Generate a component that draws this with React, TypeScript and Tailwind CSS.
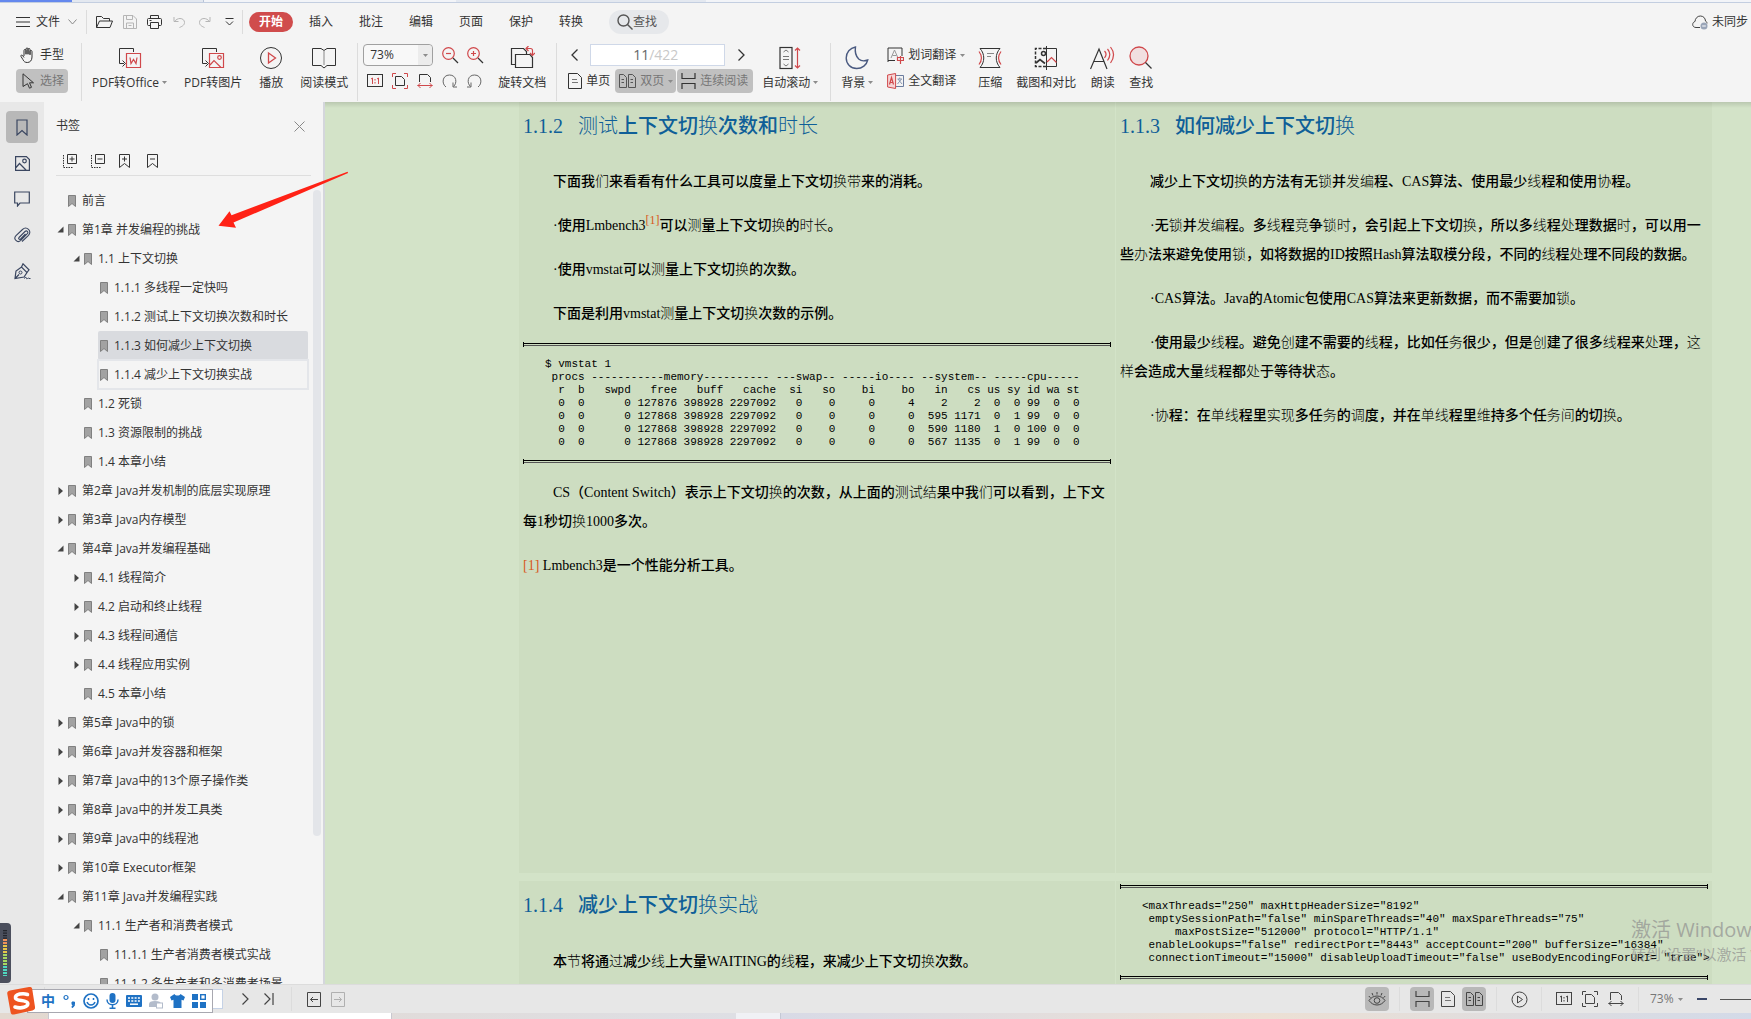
import { Fragment, useState } from 'react';
import type { ReactNode } from 'react';

interface Bookmark {
  title: string;
  level: 0 | 1 | 2;
  state?: 'open' | 'closed';
}

const bookmarks: Bookmark[] = [
  { title: '前言', level: 0 },
  { title: '第1章 并发编程的挑战', level: 0, state: 'open' },
  { title: '1.1 上下文切换', level: 1, state: 'open' },
  { title: '1.1.1 多线程一定快吗', level: 2 },
  { title: '1.1.2 测试上下文切换次数和时长', level: 2 },
  { title: '1.1.3 如何减少上下文切换', level: 2 },
  { title: '1.1.4 减少上下文切换实战', level: 2 },
  { title: '1.2 死锁', level: 1 },
  { title: '1.3 资源限制的挑战', level: 1 },
  { title: '1.4 本章小结', level: 1 },
  { title: '第2章 Java并发机制的底层实现原理', level: 0, state: 'closed' },
  { title: '第3章 Java内存模型', level: 0, state: 'closed' },
  { title: '第4章 Java并发编程基础', level: 0, state: 'open' },
  { title: '4.1 线程简介', level: 1, state: 'closed' },
  { title: '4.2 启动和终止线程', level: 1, state: 'closed' },
  { title: '4.3 线程间通信', level: 1, state: 'closed' },
  { title: '4.4 线程应用实例', level: 1, state: 'closed' },
  { title: '4.5 本章小结', level: 1 },
  { title: '第5章 Java中的锁', level: 0, state: 'closed' },
  { title: '第6章 Java并发容器和框架', level: 0, state: 'closed' },
  { title: '第7章 Java中的13个原子操作类', level: 0, state: 'closed' },
  { title: '第8章 Java中的并发工具类', level: 0, state: 'closed' },
  { title: '第9章 Java中的线程池', level: 0, state: 'closed' },
  { title: '第10章 Executor框架', level: 0, state: 'closed' },
  { title: '第11章 Java并发编程实践', level: 0, state: 'open' },
  { title: '11.1 生产者和消费者模式', level: 1, state: 'open' },
  { title: '11.1.1 生产者消费者模式实战', level: 2 },
  { title: '11.1.2 多生产者和多消费者场景', level: 2 },
];

const levelIndent = { 0: 'pl-0', 1: 'pl-4', 2: 'pl-8' };

const menuTabs = ['插入', '批注', '编辑', '页面', '保护', '转换'];

const vmstatOutput = `$ vmstat 1
 procs -----------memory---------- ---swap-- -----io---- --system-- -----cpu-----
  r  b   swpd   free   buff   cache  si   so    bi    bo   in   cs us sy id wa st
  0  0      0 127876 398928 2297092   0    0     0     4    2    2  0  0 99  0  0
  0  0      0 127868 398928 2297092   0    0     0     0  595 1171  0  1 99  0  0
  0  0      0 127868 398928 2297092   0    0     0     0  590 1180  1  0 100 0  0
  0  0      0 127868 398928 2297092   0    0     0     0  567 1135  0  1 99  0  0`;

const connectorConfig = `<maxThreads="250" maxHttpHeaderSize="8192"
 emptySessionPath="false" minSpareThreads="40" maxSpareThreads="75"
     maxPostSize="512000" protocol="HTTP/1.1"
 enableLookups="false" redirectPort="8443" acceptCount="200" bufferSize="16384"
 connectionTimeout="15000" disableUploadTimeout="false" useBodyEncodingForURI= "true">`;

// The embedded book font lacks these glyphs, they come out in a lighter face
const lightGlyphs = '们换带测试时长锁发编线竞处办创务协实现调单维间节过战结态样这';

function Glyphs({ text }: { text: string }) {
  const runs: { light: boolean; value: string }[] = [];
  for (const char of text) {
    const light = lightGlyphs.includes(char);
    const last = runs[runs.length - 1];
    if (last && last.light === light) last.value += char;
    else runs.push({ light, value: char });
  }
  return (
    <>
      {runs.map((run, index) => (
        <span key={index} className={run.light ? 'font-light' : ''}>
          {run.value}
        </span>
      ))}
    </>
  );
}

function Icon({ w, h, children, className = '' }: { w: number; h: number; children: ReactNode; className?: string }) {
  return (
    <svg
      width={w}
      height={h}
      viewBox={`0 0 ${w} ${h}`}
      fill="none"
      stroke="currentColor"
      className={`shrink-0 ${className}`}
      aria-hidden="true"
    >
      {children}
    </svg>
  );
}

const RED = '#d0484b';

function Caret() {
  return (
    <Icon w={5} h={3}>
      <path d="M0 0h5L2.5 3z" fill="#8c8c8c" stroke="none" />
    </Icon>
  );
}

function ActualSizeIcon({ accent = 'currentColor' }: { accent?: string }) {
  return (
    <Icon w={16} h={14}>
      <rect x=".5" y=".5" width="15" height="12" />
      <path d="M4 5l1.500-1v6M10 5l1.500-1v6" stroke={accent} />
      <path d="M8 5v1.500M8 8v1.500" stroke={accent} />
    </Icon>
  );
}

function FitPageIcon({ accent = 'currentColor' }: { accent?: string }) {
  return (
    <Icon w={16} h={16}>
      <path d="M3.5 3.5h6l3 3v6h-9z" />
      <path d="M.5 4V.5H4M12 .5h3.500V4M15.500 12v3.500H12M4 15.500H.5V12" stroke={accent} />
    </Icon>
  );
}

function FitWidthIcon({ accent = 'currentColor' }: { accent?: string }) {
  return (
    <Icon w={16} h={16}>
      <path d="M2.5 9V1.500h8l3 3V9" />
      <path d="M.5 12.500h15M3.500 10L1 12.500l2.500 2.500M12.500 10l2.500 2.500-2.500 2.500" stroke={accent} />
    </Icon>
  );
}

function PageIcon() {
  return (
    <Icon w={14} h={16}>
      <path d="M.5 .5h9l4 4v11H.5z" />
      <path d="M4 6.500h5M4 9.500h6" stroke="#777" />
    </Icon>
  );
}

function TwoPagesIcon() {
  return (
    <Icon w={17} h={16}>
      <path d="M.5 1.500h4l3 3v10h-7zM9.500 1.500h4l3 3v10h-7z" />
      <path d="M2.500 6.500H5M2.500 9.500H5M11.500 6.500H14M11.500 9.500H14" />
    </Icon>
  );
}

function ContinuousIcon() {
  return (
    <Icon w={15} h={16}>
      <path d="M1 0v5.500h13V0M1 16v-5.500h13V16" strokeWidth="1.200" />
    </Icon>
  );
}

function Separator({ className = '' }: { className?: string }) {
  return <div className={`w-px shrink-0 bg-[#dcdcdc] ${className}`} />;
}

function MenuBar() {
  return (
    <div className="flex h-[38px] shrink-0 items-center pl-4">
      <button type="button" className="flex items-center">
        <Icon w={14} h={10}>
          <path d="M0 .5h14M0 5h14M0 9.500h14" />
        </Icon>
        <span className="ml-1.5">文件</span>
        <Icon w={9} h={6} className="ml-2 text-[#8a8a8a]">
          <path d="M.5 .5l4 4.500 4-4.500" />
        </Icon>
      </button>
      <Separator className="ml-[9px] mr-[5px] h-6" />
      <button type="button" aria-label="打开" className="flex w-[25px] justify-center">
        <Icon w={17} h={14}>
          <path d="M.5 12.500V1.500h5l2 2h6v2.500M.5 12.500l3-6.500h13l-2.500 6.500z" />
        </Icon>
      </button>
      <button type="button" aria-label="保存" className="flex w-[25px] justify-center text-[#b5b5b5]">
        <Icon w={14} h={14}>
          <path d="M.5 .5h9.500l3.500 3.500v9.500H.5zM3.500 .5v4h6v-4M3.500 13.500V8h7v5.500M5.500 10.500h3" />
        </Icon>
      </button>
      <button type="button" aria-label="打印" className="flex w-[25px] justify-center">
        <Icon w={15} h={14}>
          <path d="M3.500 3.500v-3h8v3M3.500 10.500h-2c-.6 0-1-.4-1-1v-5c0-.6.4-1 1-1h12c.6 0 1 .4 1 1v5c0 .6-.4 1-1 1h-2M3.500 7.500h8v6h-8zM2.500 5.500h2" />
        </Icon>
      </button>
      <button type="button" aria-label="撤销" className="flex w-[25px] justify-center text-[#b5b5b5]">
        <Icon w={13} h={12}>
          <path d="M1 1v4.500h4.500M1.500 5.500C3 3.500 5 2.500 7 2.500c2.700 0 4.500 1.700 4.500 4 0 2-1.300 3.500-5 5" />
        </Icon>
      </button>
      <button type="button" aria-label="恢复" className="flex w-[25px] justify-center text-[#b5b5b5]">
        <Icon w={13} h={12}>
          <path d="M12 1v4.500H7.500M11.500 5.500C10 3.500 8 2.500 6 2.500c-2.700 0-4.500 1.700-4.500 4 0 2 1.300 3.500 5 5" />
        </Icon>
      </button>
      <button type="button" aria-label="更多" className="flex w-[25px] justify-center">
        <Icon w={9} h={8}>
          <path d="M.5 .5h8M1 3.500l3.500 3.500L8 3.500" />
        </Icon>
      </button>
      <Separator className="mr-1.5 h-6" />
      <button type="button" className="h-5 w-11 rounded-full bg-[#d04c4c] font-bold text-white">
        开始
      </button>
      <div className="ml-[3px] flex">
        {menuTabs.map((tab) => (
          <button key={tab} type="button" className="w-[50px]">
            {tab}
          </button>
        ))}
      </div>
      <button type="button" className="ml-[13px] flex h-6 items-center rounded-full bg-[#e6e8eb] pl-2 pr-3 text-[#555]">
        <Icon w={16} h={16}>
          <circle cx="6.500" cy="6.500" r="5.500" strokeWidth="1.400" />
          <path d="M10.500 10.500l5 5" strokeWidth="1.400" />
        </Icon>
        查找
      </button>
      <button type="button" className="ml-auto mr-[3px] flex items-center gap-1">
        <Icon w={16} h={15}>
          <path
            d="M8 12.500H4C2 12.500.7 11.200.7 9.500c0-1.500 1-2.700 2.300-3C3.200 3.500 5.300 1 8.300 1c3 0 5 2 5.200 5 1 .5 1.500 1.400 1.500 2.500"
            stroke="#444"
          />
          <circle cx="12" cy="11" r="3.500" fill="#9aa5b8" stroke="none" />
          <path d="M10.200 11h3.600" stroke="#fff" />
        </Icon>
        未同步
      </button>
    </div>
  );
}

function BigTool({ label, icon, caret = false }: { label: string; icon: ReactNode; caret?: boolean }) {
  return (
    <button type="button" className="mt-[3px] flex shrink-0 flex-col items-center">
      <span className="flex h-6 items-center">{icon}</span>
      <span className="flex items-center gap-[3px] whitespace-nowrap leading-[25px]">
        {label}
        {caret && <Caret />}
      </span>
    </button>
  );
}

function Ribbon() {
  return (
    <div className="flex h-[61px] shrink-0 items-start overflow-hidden pl-4 pt-0.5">
      <div className="mr-[13px] flex w-[52px] shrink-0 flex-col gap-0.5">
        <button type="button" className="flex h-6 items-center gap-[5px] pl-1">
          <Icon w={15} h={16}>
            <path d="M4 9V3.500c0-1.400 2-1.400 2 0V7.500M6 7V2c0-1.400 2-1.400 2 0v5.500M8 7V2.500c0-1.400 2-1.400 2 0V8M10 7.500V4.500c0-1.400 2-1.400 2 0V10c0 3.500-2 5.500-4.700 5.500-2.300 0-3.500-1-4.300-2.800L1 9.500c-.6-1.200.8-2 1.600-1L4 10.500" />
          </Icon>
          <span className="w-6">手型</span>
        </button>
        <button type="button" className="flex h-6 items-center gap-[5px] rounded bg-[#c0c0c0] pl-1 text-[#555]">
          <Icon w={15} h={16} className="text-[#333]">
            <path d="M3 .8l10.500 9H9.500l2 4.500-2 .9-2-4.500L3 13.500z" />
          </Icon>
          <span className="w-6 text-[#777]">选择</span>
        </button>
      </div>
      <Separator className="h-[58px]" />

      <div className="flex gap-[17px] pl-2.5 pr-[9px]">
        <BigTool
          label="PDF转Office"
          caret
          icon={
            <Icon w={24} h={22}>
              <path d="M6 16.500H1.500V1.500h14V5M4.500 13.500l3 3-3 3" />
              <path d="M8.500 6.500h14v14h-14zM12 10.500l1 6 2.500-4 2.500 4 1-6" stroke={RED} strokeWidth="1.200" />
            </Icon>
          }
        />
        <BigTool
          label="PDF转图片"
          icon={
            <Icon w={24} h={22}>
              <path d="M6 16.500H1.500V1.500h14V5M4.500 13.500l3 3-3 3" />
              <g stroke={RED} strokeWidth="1.200">
                <path d="M8.500 6.500h14v14h-14zM9 18l4-4.500 7 7" />
                <circle cx="18.500" cy="10.500" r="1.800" />
              </g>
            </Icon>
          }
        />
        <BigTool
          label="播放"
          icon={
            <Icon w={24} h={24}>
              <circle cx="12" cy="12" r="10.500" />
              <path d="M9.500 7l7 5-7 5z" stroke={RED} strokeWidth="1.300" />
            </Icon>
          }
        />
        <BigTool
          label="阅读模式"
          icon={
            <Icon w={24} h={22}>
              <path d="M.5 1.500h8.500l3 2 3-2h8.500v17H15l-3 2.500-3-2.500H.5z" />
              <path d="M12 3.500V18" stroke="#888" />
            </Icon>
          }
        />
      </div>
      <Separator className="h-[58px]" />

      <div className="ml-1 flex shrink-0 flex-col gap-0.5">
        <div className="flex h-6 items-center pl-px">
          <div className="relative mr-[5px] flex items-center">
            <select
              aria-label="缩放比例"
              className="h-[22px] w-[70px] appearance-none rounded border border-[#a0a0a0] bg-[#f8f8f8] pl-1.5 leading-5"
            >
              <option>73%</option>
            </select>
            <span className="pointer-events-none absolute right-px flex h-5 w-3.5 items-center justify-center rounded-r bg-[#ececec]">
              <Caret />
            </span>
          </div>
          <button type="button" aria-label="缩小" className="flex w-[25px] justify-center">
            <Icon w={17} h={17}>
              <circle cx="6.500" cy="6.500" r="5.800" stroke={RED} strokeWidth="1.200" />
              <path d="M4 6.500h5" stroke={RED} strokeWidth="1.200" />
              <path d="M11 11l5 5" strokeWidth="1.300" />
            </Icon>
          </button>
          <button type="button" aria-label="放大" className="flex w-[25px] justify-center">
            <Icon w={17} h={17}>
              <circle cx="6.500" cy="6.500" r="5.800" stroke={RED} strokeWidth="1.200" />
              <path d="M4 6.500h5M6.500 4v5" stroke={RED} strokeWidth="1.200" />
              <path d="M11 11l5 5" strokeWidth="1.300" />
            </Icon>
          </button>
        </div>
        <div className="flex h-6 items-center">
          <button type="button" aria-label="实际大小" className="flex w-[25px] justify-center">
            <ActualSizeIcon accent={RED} />
          </button>
          <button type="button" aria-label="适合页面" className="flex w-[25px] justify-center">
            <FitPageIcon accent={RED} />
          </button>
          <button type="button" aria-label="适合宽度" className="flex w-[25px] justify-center">
            <FitWidthIcon accent={RED} />
          </button>
          <button type="button" aria-label="顺时针旋转" className="flex w-[25px] justify-center text-[#666]">
            <Icon w={15} h={15}>
              <path d="M4 13C-.5 10 0 1 7.500 1 14.500 1 15.500 9 11.500 12.500M11 8.500v4.500h4" />
            </Icon>
          </button>
          <button type="button" aria-label="逆时针旋转" className="flex w-[25px] justify-center text-[#666]">
            <Icon w={15} h={15}>
              <path d="M11 13C15.500 10 15 1 7.500 1 .5 1-.5 9 3.500 12.500M4 8.500v4.500H0" />
            </Icon>
          </button>
        </div>
      </div>

      <div className="px-2.5">
        <BigTool
          label="旋转文档"
          icon={
            <Icon w={25} h={24}>
              <path d="M5 18.500H1.500v-16h12l3 3V8M5.500 8.500h14.500l2.500 3v10H5.500z" strokeWidth="1.200" />
              <path d="M16.500 2.500h4c1.500 0 2 1 2 2V9M18.500 0L16 2.500 18.500 5M20 7l2.500 2.500L25 7" stroke={RED} strokeWidth="1.200" />
            </Icon>
          }
        />
      </div>
      <Separator className="h-[58px]" />

      <div className="ml-[7px] mr-[9px] flex shrink-0 flex-col gap-0.5">
        <div className="flex h-6 items-center">
          <button type="button" aria-label="上一页" className="flex w-5 justify-center">
            <Icon w={7} h={12}>
              <path d="M6.500 .5L1 6l5.500 5.500" strokeWidth="1.300" />
            </Icon>
          </button>
          <label className="ml-1.5 mr-1.5 flex h-[22px] w-[135px] items-center border border-[#cfd8e8] bg-white text-sm">
            <input aria-label="页码" defaultValue="11" className="w-[58px] bg-transparent text-right text-[#666] outline-none" />
            <span className="text-[#c8c8c8]">/422</span>
          </label>
          <button type="button" aria-label="下一页" className="flex w-5 justify-center">
            <Icon w={7} h={12}>
              <path d="M.5 .5L6 6 .5 11.500" strokeWidth="1.300" />
            </Icon>
          </button>
        </div>
        <div className="flex h-6 items-center">
          <button type="button" className="mr-[5px] flex h-6 items-center gap-1 pl-1">
            <PageIcon />
            单页
          </button>
          <button type="button" className="flex h-6 w-[61px] items-center gap-1 rounded bg-[#c0c0c0] pl-1 text-[#555]">
            <TwoPagesIcon />
            <span className="text-[#777]">双页</span>
            <Caret />
          </button>
          <button type="button" className="ml-px flex h-6 w-[76px] items-center gap-1 rounded bg-[#c0c0c0] pl-1 text-[#333]">
            <ContinuousIcon />
            <span className="whitespace-nowrap text-[#777]">连续阅读</span>
          </button>
        </div>
      </div>

      <BigTool
        label="自动滚动"
        caret
        icon={
          <Icon w={22} h={24}>
            <rect x="1" y="1.500" width="12" height="21" strokeWidth="1.200" />
            <path d="M4 10.500h6M4 13.500h6M4.500 6L7 4l2.500 2M4.500 18L7 20l2.500-2" stroke="#777" />
            <path d="M18.500 2v20M16 4.500L18.500 2 21 4.500M16 19.500l2.500 2.500 2.500-2.500" stroke={RED} strokeWidth="1.200" />
          </Icon>
        }
      />
      <Separator className="ml-3 mr-2.5 h-[58px]" />
      <BigTool
        label="背景"
        caret
        icon={
          <Icon w={24} h={24} className="text-[#4a5a80]">
            <path d="M10.500 1C5 2 1.200 6.500 1.200 12c0 6 4.500 10.500 10.500 10.500 5.500 0 10-3.500 11-8.500-4 1.500-7 .8-9-1-2.500-2.500-4-7-3.200-12z" strokeWidth="1.400" />
          </Icon>
        }
      />
      <div className="ml-[14px] mr-[13px] flex shrink-0 flex-col gap-0.5">
        <button type="button" className="flex h-6 items-center gap-1">
          <Icon w={17} h={17}>
            <path d="M8 13.500H1V1h14v8M1 13.500v1.500" />
            <path d="M4 11l3.500-8 3.500 8M5.500 8.500h4" stroke="#999" />
            <path d="M10.500 10.500h6v3h-6zM13.500 9v8" stroke={RED} strokeWidth="1.200" />
          </Icon>
          划词翻译
          <Caret />
        </button>
        <button type="button" className="flex h-6 items-center gap-1">
          <Icon w={17} h={16}>
            <path d="M9 2.500h7.500v11H9" stroke="#6b7c9e" />
            <path d="M10.500 6h4.500M12.700 4.500V6M14.500 6l-4 5M11 6l4 5" stroke="#8a97b0" />
            <path d="M.6 2l8-1.500v15l-8-1.500z" fill="#f6d5d6" stroke={RED} />
            <path d="M2.500 11.500l2-7 2 7M3 9.500h3" stroke={RED} strokeWidth="1.200" />
          </Icon>
          全文翻译
        </button>
      </div>
      <div className="flex gap-3.5">
        <BigTool
          label="压缩"
          icon={
            <Icon w={24} h={22}>
              <path d="M2 1.500h20c-5 5.500-5 13.500 0 19H2c5-5.500 5-13.500 0-19z" />
              <path d="M9 6.500h7M9 9.500h4" stroke="#888" />
              <path d="M1 4.500c3 4 3 9 0 13M23 4.500c-3 4-3 9 0 13" stroke={RED} strokeWidth="1.200" />
            </Icon>
          }
        />
        <BigTool
          label="截图和对比"
          icon={
            <Icon w={24} h={24}>
              <path d="M12 2.500H1.500v18H12" strokeWidth="1.500" strokeDasharray="3 1.500" />
              <path d="M12.500 0v24M13 2.500h9.500v18H13" />
              <circle cx="9.500" cy="7.500" r="2" strokeWidth="1.500" />
              <path d="M2 17l4-3.500 5 4" strokeWidth="1.700" />
              <path d="M13 16l4.500-4.500 5 5" stroke={RED} strokeWidth="1.200" />
            </Icon>
          }
        />
        <BigTool
          label="朗读"
          icon={
            <Icon w={25} h={24}>
              <path d="M.5 23L9 3l8 20M4 15.500h10" strokeWidth="1.200" />
              <path d="M14.500 5c2 2 2 4.500 0 7M17.500 3c3 3.500 3 7.500 0 11.500M20.500 1c4 5 4 10.500 0 16" stroke={RED} strokeWidth="1.200" />
            </Icon>
          }
        />
        <BigTool
          label="查找"
          icon={
            <Icon w={24} h={24}>
              <circle cx="10" cy="10" r="9" fill="#f1dfe0" stroke={RED} strokeWidth="1.300" />
              <path d="M16.500 16.500l6 6" strokeWidth="1.300" />
            </Icon>
          }
        />
      </div>
    </div>
  );
}

function SideRail() {
  const base = 'flex size-8 items-center justify-center rounded';
  return (
    <nav className="flex w-11 shrink-0 flex-col items-center gap-1 bg-[#e8e8e8] pt-[9px] text-[#3a4660]">
      <button type="button" aria-label="书签" className={`${base} bg-[#b8b8b8]`}>
        <Icon w={12} h={17}>
          <path d="M1 1h10v15l-5-4.500L1 16z" strokeWidth="1.200" />
        </Icon>
      </button>
      <button type="button" aria-label="缩略图" className={base}>
        <Icon w={15} h={15}>
          <path d="M.6 .6h10.800l3 3v10.800H.6zM1 11.500l3.500-4L11 14" strokeWidth="1.200" />
          <circle cx="9.500" cy="5" r="1.800" strokeWidth="1.200" />
        </Icon>
      </button>
      <button type="button" aria-label="批注" className={base}>
        <Icon w={16} h={16}>
          <path d="M.7 1h14.600v11H6l-2.500 3v-3H.7z" strokeWidth="1.200" />
        </Icon>
      </button>
      <button type="button" aria-label="附件" className={base}>
        <Icon w={17} h={16}>
          <path
            d="M5 10.500l6-6c1.700-1.500 3.800.5 2.300 2.200l-6.500 6.600c-3.300 3.200-8-1.200-4.800-4.600L8.500 2.500c4-3.800 10 1.500 6 5.800L8 14.500M5 10.500c-1 1.200.5 2.500 1.600 1.500L11.500 7"
            strokeWidth="1.100"
          />
        </Icon>
      </button>
      <button type="button" aria-label="签名" className={base}>
        <Icon w={17} h={17}>
          <path d="M1 15.500l1-7.500 5.500-4 5.500 5.500-3 4.500zM7.500 4L9 .8l6 6-2 2.700M1 15.500l4-4" strokeWidth="1.200" />
          <circle cx="6.500" cy="9.500" r="1.500" />
          <path d="M10 15.500c1.500-1.500 2.500-1.500 2.500 0s2-1.500 2.500 0h1.500" />
        </Icon>
      </button>
    </nav>
  );
}

function BookmarkPanel() {
  const [selected, setSelected] = useState(5);

  return (
    <aside className="relative flex w-[281px] shrink-0 flex-col overflow-hidden border-r-2 border-[#d4d6dc] bg-[#f4f4f4] pl-3">
      <div className="flex h-12 shrink-0 items-center justify-between pr-[18px]">
        <h2>书签</h2>
        <button type="button" aria-label="关闭">
          <Icon w={11} h={11} className="text-[#888]">
            <path d="M.5 .5l10 10M10.500 .5l-10 10" />
          </Icon>
        </button>
      </div>
      <div className="mr-3 flex h-[26px] shrink-0 items-start gap-[14px] border-b border-[#dedede] pl-[7px] pt-1">
        <button type="button" aria-label="全部展开">
          <Icon w={14} h={14}>
            <path d="M4.500 .5h9v9h-9zM6.500 5h5M9 2.500v5" />
            <path d="M.5 1v12.500H10" strokeDasharray="1.500 1" />
          </Icon>
        </button>
        <button type="button" aria-label="全部收起">
          <Icon w={14} h={14}>
            <path d="M4.500 .5h9v9h-9zM6.500 5h5" />
            <path d="M.5 1v12.500H10" strokeDasharray="1.500 1" />
          </Icon>
        </button>
        <button type="button" aria-label="添加书签" className="flex w-3.5">
          <Icon w={11} h={14}>
            <path d="M.5 .5h10v13l-5-4-5 4zM3 5h5M5.500 2.500v5" />
          </Icon>
        </button>
        <button type="button" aria-label="删除书签" className="flex w-3.5">
          <Icon w={11} h={14}>
            <path d="M.5 .5h10v13l-5-4-5 4zM3 5h5" />
          </Icon>
        </button>
      </div>
      <ul className="mt-2.5 min-h-0 flex-1 pr-[15px]">
        {bookmarks.map((item, index) => (
          <li key={item.title} className={`flex h-[29px] items-stretch ${levelIndent[item.level]}`}>
            <span className="flex w-2.5 shrink-0 items-center pl-px">
              {item.state === 'open' && (
                <Icon w={7} h={7}>
                  <path d="M6.500 .5v6h-6z" fill="#444" stroke="none" />
                </Icon>
              )}
              {item.state === 'closed' && (
                <Icon w={7} h={8}>
                  <path d="M1.500 0L6 4 1.500 8z" fill="#444" stroke="none" />
                </Icon>
              )}
            </span>
            <button
              type="button"
              onClick={() => setSelected(index)}
              className={`flex flex-1 items-center gap-1.5 whitespace-nowrap pl-0.5 ${
                index === selected ? 'rounded-xs bg-[#d9dbdf]' : ''
              } ${index === 6 ? 'outline-2 -outline-offset-1 outline-[#e4e6ea]' : ''}`}
            >
              <Icon w={8} h={12}>
                <path d="M.5 .5h7v11L4 8.500.5 11.500z" fill="#a2a2a2" stroke="#808080" />
              </Icon>
              {item.title}
            </button>
          </li>
        ))}
      </ul>
      <div className="absolute right-0.5 top-[88px] h-[646px] w-2 rounded-full bg-[#e3e5e9]" />
    </aside>
  );
}

function Rule() {
  return (
    <div className="flex h-[5px] items-center border-x border-black">
      <div className="h-[3px] flex-1 border-t border-b border-t-black border-b-[#555]" />
    </div>
  );
}

function CodeBlock({ children }: { children: string }) {
  return (
    <div className="-my-px shrink-0">
      <Rule />
      <pre className="pb-2.5 pl-[22px] pt-[11px] font-['Liberation_Mono',monospace] text-[11px] leading-[13px] font-normal text-black">
        {children}
      </pre>
      <Rule />
    </div>
  );
}

function Heading({ number, title }: { number: string; title: string }) {
  return (
    <h2 className="flex h-6 items-center gap-[15px] text-xl font-medium text-[#0f5f98]">
      <span className="font-normal">{number}</span>
      <span>
        <Glyphs text={title} />
      </span>
    </h2>
  );
}

// Line ends are fixed by the book's typesetting
function Para({ lines }: { lines: string[] }) {
  return (
    <p className="indent-[30px]">
      {lines.map((line, index) => (
        <Fragment key={line}>
          {index > 0 && <br />}
          <Glyphs text={line} />
        </Fragment>
      ))}
    </p>
  );
}

function Document() {
  const page =
    "flex-1 min-w-0 overflow-hidden bg-[#cdddc1] px-1 font-['Liberation_Serif','Noto_Sans_CJK_SC',serif] text-sm leading-[29px] font-medium text-black";

  return (
    <main className="relative flex min-w-0 flex-1 flex-col gap-2 overflow-hidden bg-[#d3e3c8] pl-[194px] pr-[39px]">
      <div className="flex min-h-0 flex-1 gap-px">
        <section className={page}>
          <div className="pt-3">
            <Heading number="1.1.2" title="测试上下文切换次数和时长" />
          </div>
          <div className="mt-[29px] flex flex-col gap-[15px]">
            <Para lines={['下面我们来看看有什么工具可以度量上下文切换带来的消耗。']} />
            <p className="indent-[30px]">
              <span>·使用Lmbench3</span>
              <a href="#note-1" className="align-super text-xs leading-3 font-normal text-[#d8571c]">
                [1]
              </a>
              <Glyphs text="可以测量上下文切换的时长。" />
            </p>
            <Para lines={['·使用vmstat可以测量上下文切换的次数。']} />
            <Para lines={['下面是利用vmstat测量上下文切换次数的示例。']} />
            <CodeBlock>{vmstatOutput}</CodeBlock>
            <Para
              lines={[
                'CS（Content Switch）表示上下文切换的次数，从上面的测试结果中我们可以看到，上下文',
                '每1秒切换1000多次。',
              ]}
            />
            <p>
              <a id="note-1" href="#top" className="font-normal text-[#d8571c]">
                [1]
              </a>{' '}
              <Glyphs text="Lmbench3是一个性能分析工具。" />
            </p>
          </div>
        </section>
        <section className={page}>
          <div className="pt-3">
            <Heading number="1.1.3" title="如何减少上下文切换" />
          </div>
          <div className="mt-[29px] flex flex-col gap-[15px]">
            <Para lines={['减少上下文切换的方法有无锁并发编程、CAS算法、使用最少线程和使用协程。']} />
            <Para
              lines={[
                '·无锁并发编程。多线程竞争锁时，会引起上下文切换，所以多线程处理数据时，可以用一',
                '些办法来避免使用锁，如将数据的ID按照Hash算法取模分段，不同的线程处理不同段的数据。',
              ]}
            />
            <Para lines={['·CAS算法。Java的Atomic包使用CAS算法来更新数据，而不需要加锁。']} />
            <Para
              lines={[
                '·使用最少线程。避免创建不需要的线程，比如任务很少，但是创建了很多线程来处理，这',
                '样会造成大量线程都处于等待状态。',
              ]}
            />
            <Para lines={['·协程：在单线程里实现多任务的调度，并在单线程里维持多个任务间的切换。']} />
          </div>
        </section>
      </div>
      <div className="flex shrink-0 gap-px">
        <section className={page}>
          <div className="pt-3">
            <Heading number="1.1.4" title="减少上下文切换实战" />
          </div>
          <div className="mt-[30px] pb-2">
            <Para lines={['本节将通过减少线上大量WAITING的线程，来减少上下文切换次数。']} />
          </div>
        </section>
        <section className={`${page} pt-1`}>
          <CodeBlock>{connectorConfig}</CodeBlock>
        </section>
      </div>

      {/* shadow cast by the ribbon */}
      <div className="pointer-events-none absolute inset-x-0 top-0 h-1.5 bg-linear-to-b from-black/12 to-transparent" />

      <div className="pointer-events-none absolute bottom-5 left-[1306px] whitespace-nowrap text-[#8f8f8f]/70">
        <p className="text-xl leading-7">激活 Windows</p>
        <p className="text-[15px] leading-5">转到“设置”以激活 Windows。</p>
      </div>
    </main>
  );
}

function StatusBar() {
  const cell = 'flex size-6 shrink-0 items-center justify-center rounded';
  return (
    <footer className="flex h-[29px] shrink-0 items-center overflow-hidden border-t border-[#dcdcdc] bg-[#e7e7e7] pl-11 text-[#444]">
      <Separator className="mr-[68px] h-6 bg-[#d0d0d0]" />
      <input aria-label="跳转页码" className="h-5 w-[110px] border border-[#c5d2e6] bg-white" />
      <div className="ml-2.5 flex">
        <button type="button" aria-label="下一页" className={cell}>
          <Icon w={7} h={12}>
            <path d="M.5 .5L6 6 .5 11.500" strokeWidth="1.200" />
          </Icon>
        </button>
        <button type="button" aria-label="末页" className={cell}>
          <Icon w={10} h={12}>
            <path d="M.5 .5L6 6 .5 11.500M9 0v12" strokeWidth="1.200" />
          </Icon>
        </button>
      </div>
      <Separator className="mx-2.5 h-6 bg-[#d0d0d0]" />
      <button type="button" aria-label="后退" className={cell}>
        <Icon w={14} h={15}>
          <path d="M.5 .5h13v14H.5zM3.500 7.500H11M6 5L3.500 7.500 6 10" />
        </Icon>
      </button>
      <button type="button" aria-label="前进" className={`${cell} text-[#b0b0b0]`}>
        <Icon w={14} h={15}>
          <path d="M.5 .5h13v14H.5zM3 7.500h7.500M8 5l2.500 2.500L8 10" />
        </Icon>
      </button>

      <button type="button" aria-label="护眼模式" className={`${cell} ml-auto bg-[#b8b8b8]`}>
        <Icon w={18} h={16}>
          <path d="M1 9.500c4-6 12-6 16 0-4 6-12 6-16 0zM9 1v2.500M4 2l1 2.500M14 2l-1 2.500M.8 5l1.700 1.800M17.200 5l-1.700 1.800" />
          <circle cx="9" cy="9.500" r="2.800" />
        </Icon>
      </button>
      <Separator className="mx-2.5 h-6 bg-[#d0d0d0]" />
      <div className="flex gap-0.5">
        <button type="button" aria-label="连续阅读" className={`${cell} bg-[#b8b8b8]`}>
          <ContinuousIcon />
        </button>
        <button type="button" aria-label="单页" className={cell}>
          <PageIcon />
        </button>
        <button type="button" aria-label="双页" className={`${cell} bg-[#b8b8b8]`}>
          <TwoPagesIcon />
        </button>
      </div>
      <Separator className="mx-2.5 h-6 bg-[#d0d0d0]" />
      <button type="button" aria-label="播放" className={cell}>
        <Icon w={17} h={17}>
          <circle cx="8.500" cy="8.500" r="7.500" />
          <path d="M6.500 5l5 3.500-5 3.500z" />
        </Icon>
      </button>
      <Separator className="mx-2.5 h-6 bg-[#d0d0d0]" />
      <div className="flex gap-0.5">
        <button type="button" aria-label="实际大小" className={cell}>
          <ActualSizeIcon />
        </button>
        <button type="button" aria-label="适合页面" className={cell}>
          <FitPageIcon />
        </button>
        <button type="button" aria-label="适合宽度" className={cell}>
          <FitWidthIcon />
        </button>
      </div>
      <Separator className="mx-2.5 h-6 bg-[#d0d0d0]" />
      <button type="button" className="flex w-[39px] items-center gap-1 pl-px text-[#777]">
        73%
        <Caret />
      </button>
      <button type="button" aria-label="缩小" className="flex w-7 justify-center">
        <span className="h-0.5 w-2.5 bg-[#3a4668]" />
      </button>
      <div className="flex w-[35px] items-center overflow-hidden pl-1">
        <input
          type="range"
          aria-label="缩放"
          defaultValue={100}
          className="h-px w-[150px] shrink-0 appearance-none bg-[#555]"
        />
      </div>
    </footer>
  );
}

function ImeBar() {
  return (
    <div className="absolute bottom-1 left-[7px] flex h-7 items-center text-[#1f72c4]">
      <Icon w={28} h={28} className="z-10">
        <path d="M3 3.500L22 0c2-.3 3 .5 3.300 2.500L28 20c.3 2-.6 3-2.500 3.500L7 27.500c-2 .4-3-.3-3.400-2.300L.3 7C0 5 1 4 3 3.500z" fill="#ee5420" stroke="none" />
        <path
          d="M20.500 7.500C16 5.800 8 7 8.500 11c.5 3.500 12 1.500 12.300 5.500.3 3.500-6.500 5.500-12.800 3.500"
          stroke="#fff"
          strokeWidth="3.600"
          strokeLinecap="round"
        />
      </Icon>
      <div className="-ml-2 flex h-6 items-center gap-[7px] border border-[#a8a8b0] bg-white pl-[13px] pr-1.5">
        <span className="w-3.5 text-center text-sm font-bold leading-6">中</span>
        <Icon w={14} h={14}>
          <circle cx="4" cy="3.500" r="2" strokeWidth="1.200" />
          <path d="M10 8h2.500v2.500c0 1.500-.8 2.500-2.500 3v-1.200c.8-.3 1.200-.8 1.200-1.800H10z" fill="currentColor" />
        </Icon>
        <Icon w={16} h={16}>
          <circle cx="8" cy="8" r="7" strokeWidth="1.700" />
          <path d="M5.500 5v2M10.500 5v2M4 9c1.500 4 6.500 4 8 0" strokeWidth="1.500" />
        </Icon>
        <Icon w={13} h={16}>
          <rect x="3.500" y="0" width="6" height="10" rx="3" fill="currentColor" stroke="none" />
          <path d="M1 6.500c0 7 11 7 11 0M6.500 12v3M3.500 15.200h6" strokeWidth="1.500" />
        </Icon>
        <Icon w={16} h={12}>
          <rect x="0" y="0" width="16" height="12" rx="1" fill="currentColor" stroke="none" />
          <path d="M2 3h12M2 6h12" stroke="#fff" strokeWidth="1.500" strokeDasharray="2 1.300" />
          <path d="M4 9.200h8" stroke="#fff" strokeWidth="1.500" />
        </Icon>
        <Icon w={14} h={16} className="text-[#b3bccb]">
          <circle cx="6" cy="4" r="3.500" fill="currentColor" stroke="none" />
          <path d="M0 14V11c0-2 2-3 6-3s6 1 6 3v3z" fill="currentColor" stroke="none" />
          <rect x="7.500" y="10" width="6" height="5" fill="#fff" />
        </Icon>
        <Icon w={15} h={14}>
          <path d="M4.500 0c1 2 5 2 6 0L15 3l-1.500 3.500-2-.7V14h-8V5.800l-2 .7L0 3z" fill="currentColor" stroke="none" />
        </Icon>
        <Icon w={14} h={14}>
          <path d="M0 0h6v6H0zM0 8h6v6H0zM8 8h6v6H8z" fill="currentColor" stroke="none" />
          <rect x="8.700" y=".7" width="4.600" height="4.600" strokeWidth="1.400" />
        </Icon>
      </div>
    </div>
  );
}

function VolumeMeter() {
  return (
    <div className="absolute bottom-9 left-0 h-[60px] w-[11px] rounded-r bg-[#4b4f5d]">
      <Icon w={11} h={60}>
        <path d="M5 7v9" stroke="#23252d" strokeWidth="4" strokeDasharray="1.200 1.300" />
        <path d="M5 16v6" stroke="#f0925a" strokeWidth="4" strokeDasharray="2 1" />
        <path d="M5 22v9" stroke="#e8c648" strokeWidth="4" strokeDasharray="2 1" />
        <path d="M5 31v12" stroke="#a8d860" strokeWidth="4" strokeDasharray="2 1" />
        <path d="M5 43v10" stroke="#4fd8c0" strokeWidth="4" strokeDasharray="2 1" />
      </Icon>
    </div>
  );
}

function App() {
  return (
    <div
      id="top"
      className="relative flex h-screen flex-col overflow-hidden bg-[#f4f4f4] font-['Open_Sans','Noto_Sans_CJK_SC',sans-serif] text-xs text-[#333]"
    >
      <div className="flex h-[3px] shrink-0 border-b border-[#c3cee0] bg-[#f2f4f8]">
        <div className="w-18 bg-[#6488ee]" />
        <div className="w-[132px] border-r border-[#b8c4d8] bg-[#e3e8f0]" />
        <div className="ml-[252px] w-[250px] bg-[#e3e8f0]" />
      </div>
      <MenuBar />
      <Ribbon />
      <div className="flex min-h-0 flex-1">
        <SideRail />
        <BookmarkPanel />
        <Document />
      </div>
      <StatusBar />
      <div className="flex h-1.5 shrink-0 bg-linear-to-r from-[#e3d8cf] via-[#dde0e8] to-[#d5dbe8]">
        <div className="ml-12 w-[344px] border-x border-[#c8c8d0] bg-white" />
        <div className="ml-[344px] w-[45px] border-r border-[#c4c8d4] bg-[#f0f1f5]" />
        <div className="flex-1 bg-linear-to-r from-[#d8dae6] via-[#ece0d4] to-[#d3dae8]" />
      </div>

      <VolumeMeter />
      <ImeBar />
      <svg
        width="132"
        height="60"
        viewBox="0 0 132 60"
        className="pointer-events-none absolute left-[218px] top-[170px]"
        aria-hidden="true"
      >
        <path d="M.5 55.700L11.500 41.300l2 4L129.500 1.700l.6 1.300L15.500 52.500l2.500 5.200z" fill="#ff2216" />
      </svg>
    </div>
  );
}

export default App;
